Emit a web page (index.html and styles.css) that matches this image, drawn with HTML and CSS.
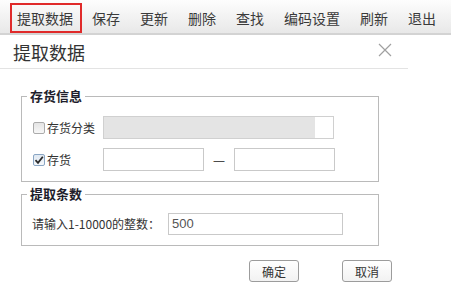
FILE: index.html
```html
<!DOCTYPE html>
<html lang="zh-CN">
<head>
<meta charset="utf-8">
<title>提取数据</title>
<link rel="stylesheet" href="styles.css">
</head>
<body>
<nav class="toolbar">
  <span class="tb-item active">提取数据</span>
  <span class="tb-item">保存</span>
  <span class="tb-item">更新</span>
  <span class="tb-item">删除</span>
  <span class="tb-item">查找</span>
  <span class="tb-item">编码设置</span>
  <span class="tb-item">刷新</span>
  <span class="tb-item">退出</span>
</nav>
<div class="dialog">
  <div class="dialog-header">
    <h1 class="dialog-title">提取数据</h1>
    <span class="close"><svg width="14" height="14" viewBox="0 0 14 14"><path d="M1 1L13 13M13 1L1 13" stroke="#a0a0a0" stroke-width="1.2" fill="none"/></svg></span>
  </div>
  <div class="dialog-body">
    <fieldset class="group">
      <legend>存货信息</legend>
      <div class="rows">
        <div class="row">
          <label class="chk-label"><span class="chk"></span>存货分类</label>
          <div class="combo"><span class="combo-fill"></span><span class="combo-end"></span></div>
        </div>
        <div class="row">
          <label class="chk-label"><span class="chk checked"><svg width="10" height="10" viewBox="0 0 10 10"><path d="M1.5 5.2L4 7.8L8.8 1.8" stroke="#2b2b2b" stroke-width="1.8" fill="none"/></svg></span>存货</label>
          <input class="text short" type="text">
          <span class="dash">—</span>
          <input class="text short" type="text">
        </div>
      </div>
    </fieldset>
    <fieldset class="group group-count">
      <legend>提取条数</legend>
      <div class="row count-row">
        <label class="count-label">请输入1-10000的整数：</label>
        <input class="text count" type="text" value="500">
      </div>
    </fieldset>
  </div>
  <div class="actions">
    <button class="btn">确定</button>
    <button class="btn">取消</button>
  </div>
</div>
</body>
</html>
```
FILE: styles.css
```css
* { box-sizing: border-box; }

body {
  margin: 0;
  width: 451px;
  height: 288px;
  overflow: hidden;
  background: #fff;
  color: #333;
  font-family: "Noto Sans CJK SC", "Liberation Sans", sans-serif;
}

.toolbar {
  display: flex;
  align-items: flex-end;
  height: 35px;
  padding-left: 10px;
  background: linear-gradient(#fdfdfd, #e8e8e8);
  border-bottom: 2px solid #d3d3d3;
}

.tb-item {
  height: 30px;
  line-height: 30px;
  padding: 0 10px;
  font-size: 14px;
  color: #3a3a3a;
  white-space: nowrap;
}

.tb-item.active {
  line-height: 26px;
  padding: 0 7px 0 5px;
  border: 2px solid #e02a2a;
}

.dialog {
  width: 408px;
}

.dialog-header {
  display: flex;
  justify-content: space-between;
  align-items: center;
  height: 34px;
  padding: 0 16px 0 13px;
  border-bottom: 1px solid #e3e3e3;
}

.dialog-title {
  margin: 0;
  font-size: 18px;
  font-weight: normal;
  line-height: 1;
  color: #333;
}

.close {
  display: flex;
  margin-bottom: 4px;
}

.dialog-body {
  padding: 19px 29px 0 21px;
}

.group {
  margin: 0;
  padding: 0 10px 10px 5px;
  border: 1px solid #bababa;
  min-width: 0;
}

.group-count {
  margin-top: 4px;
}

.group legend {
  padding: 0 3px;
  font-size: 13px;
  font-weight: bold;
  line-height: 16px;
  color: #1e1e2c;
}

.rows {
  display: flex;
  flex-direction: column;
  gap: 9px;
  padding: 12px 0 0 6px;
}

.row {
  display: flex;
  align-items: center;
  height: 23px;
}

.chk-label {
  display: flex;
  align-items: center;
  gap: 2px;
  width: 70px;
  font-size: 12px;
  color: #333;
}

.chk {
  display: flex;
  align-items: center;
  justify-content: center;
  width: 12px;
  height: 12px;
  border: 1px solid #ababab;
  border-radius: 2px;
  background: linear-gradient(#e4e4e4, #f7f7f7);
}

.chk.checked {
  border-color: #8aa6c4;
  background: linear-gradient(#dfe8f2, #f5f8fb);
}

.combo {
  display: flex;
  width: 231px;
  height: 23px;
  border: 1px solid #d0d0d0;
  background: #fff;
}

.combo-fill {
  flex: 1;
  background: #e4e4e4;
}

.combo-end {
  width: 18px;
}

.text {
  height: 23px;
  margin: 0;
  padding: 0 3px;
  border: 1px solid #c9c9c9;
  background: #fff;
  outline: none;
}

.short {
  width: 101px;
}

.dash {
  width: 30px;
  text-align: center;
  font-size: 11px;
  font-family: "Liberation Sans", sans-serif;
  color: #222;
}

.count-row {
  margin-top: 10px;
  padding-left: 5px;
}

.count-label {
  width: 136px;
  font-size: 12px;
  color: #333;
  white-space: nowrap;
}

.count {
  width: 175px;
  height: 22px;
  font-size: 13px;
  color: #555;
  font-family: "Liberation Sans", sans-serif;
}

.actions {
  display: flex;
  justify-content: flex-end;
  gap: 43px;
  padding: 14px 16px 0 0;
}

.btn {
  width: 50px;
  height: 22px;
  padding: 0;
  border: 1px solid #9c9c9c;
  border-radius: 3px;
  background: linear-gradient(#ffffff, #f2f2f2);
  font-family: "Noto Sans CJK SC", sans-serif;
  font-size: 12px;
  color: #333;
}
```
